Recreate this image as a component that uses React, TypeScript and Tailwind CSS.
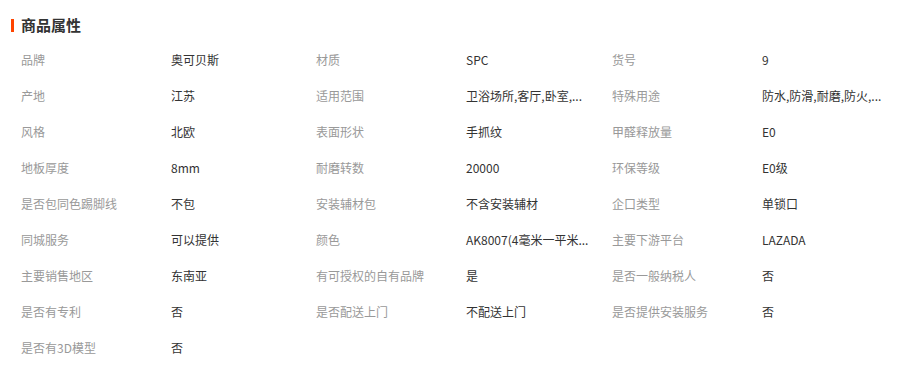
const rows: [string, string][] = [
  ["品牌", "奥可贝斯"],
  ["材质", "SPC"],
  ["货号", "9"],
  ["产地", "江苏"],
  ["适用范围", "卫浴场所,客厅,卧室,..."],
  ["特殊用途", "防水,防滑,耐磨,防火,..."],
  ["风格", "北欧"],
  ["表面形状", "手抓纹"],
  ["甲醛释放量", "E0"],
  ["地板厚度", "8mm"],
  ["耐磨转数", "20000"],
  ["环保等级", "E0级"],
  ["是否包同色踢脚线", "不包"],
  ["安装辅材包", "不含安装辅材"],
  ["企口类型", "单锁口"],
  ["同城服务", "可以提供"],
  ["颜色", "AK8007(4毫米一平米..."],
  ["主要下游平台", "LAZADA"],
  ["主要销售地区", "东南亚"],
  ["有可授权的自有品牌", "是"],
  ["是否一般纳税人", "否"],
  ["是否有专利", "否"],
  ["是否配送上门", "不配送上门"],
  ["是否提供安装服务", "否"],
  ["是否有3D模型", "否"],
];

export default function App() {
  return (
    <div
      className="w-[920px] h-[365px] bg-white pt-[15px] overflow-hidden"
      style={{ fontFamily: '"Noto Sans CJK SC", "Liberation Sans", sans-serif' }}
    >
      <div className="flex items-center h-[20px] pl-[11px]">
        <span className="w-[3px] h-[13px] bg-[#ff4400]" />
        <h2 className="ml-[7px] text-[15px] font-bold leading-[20px] text-[#333]">商品属性</h2>
      </div>

      <div className="mt-[7px] ml-[21px] grid grid-cols-[150px_145px_150px_146px_150px_145px]">
        {rows.map(([label, value]) => (
          <div key={label} className="contents">
            <div className="h-[36px] flex items-center text-[12px] text-[#999] whitespace-nowrap">{label}</div>
            <div className="h-[36px] flex items-center text-[12px] text-[#333] whitespace-nowrap">{value}</div>
          </div>
        ))}
      </div>
    </div>
  );
}
